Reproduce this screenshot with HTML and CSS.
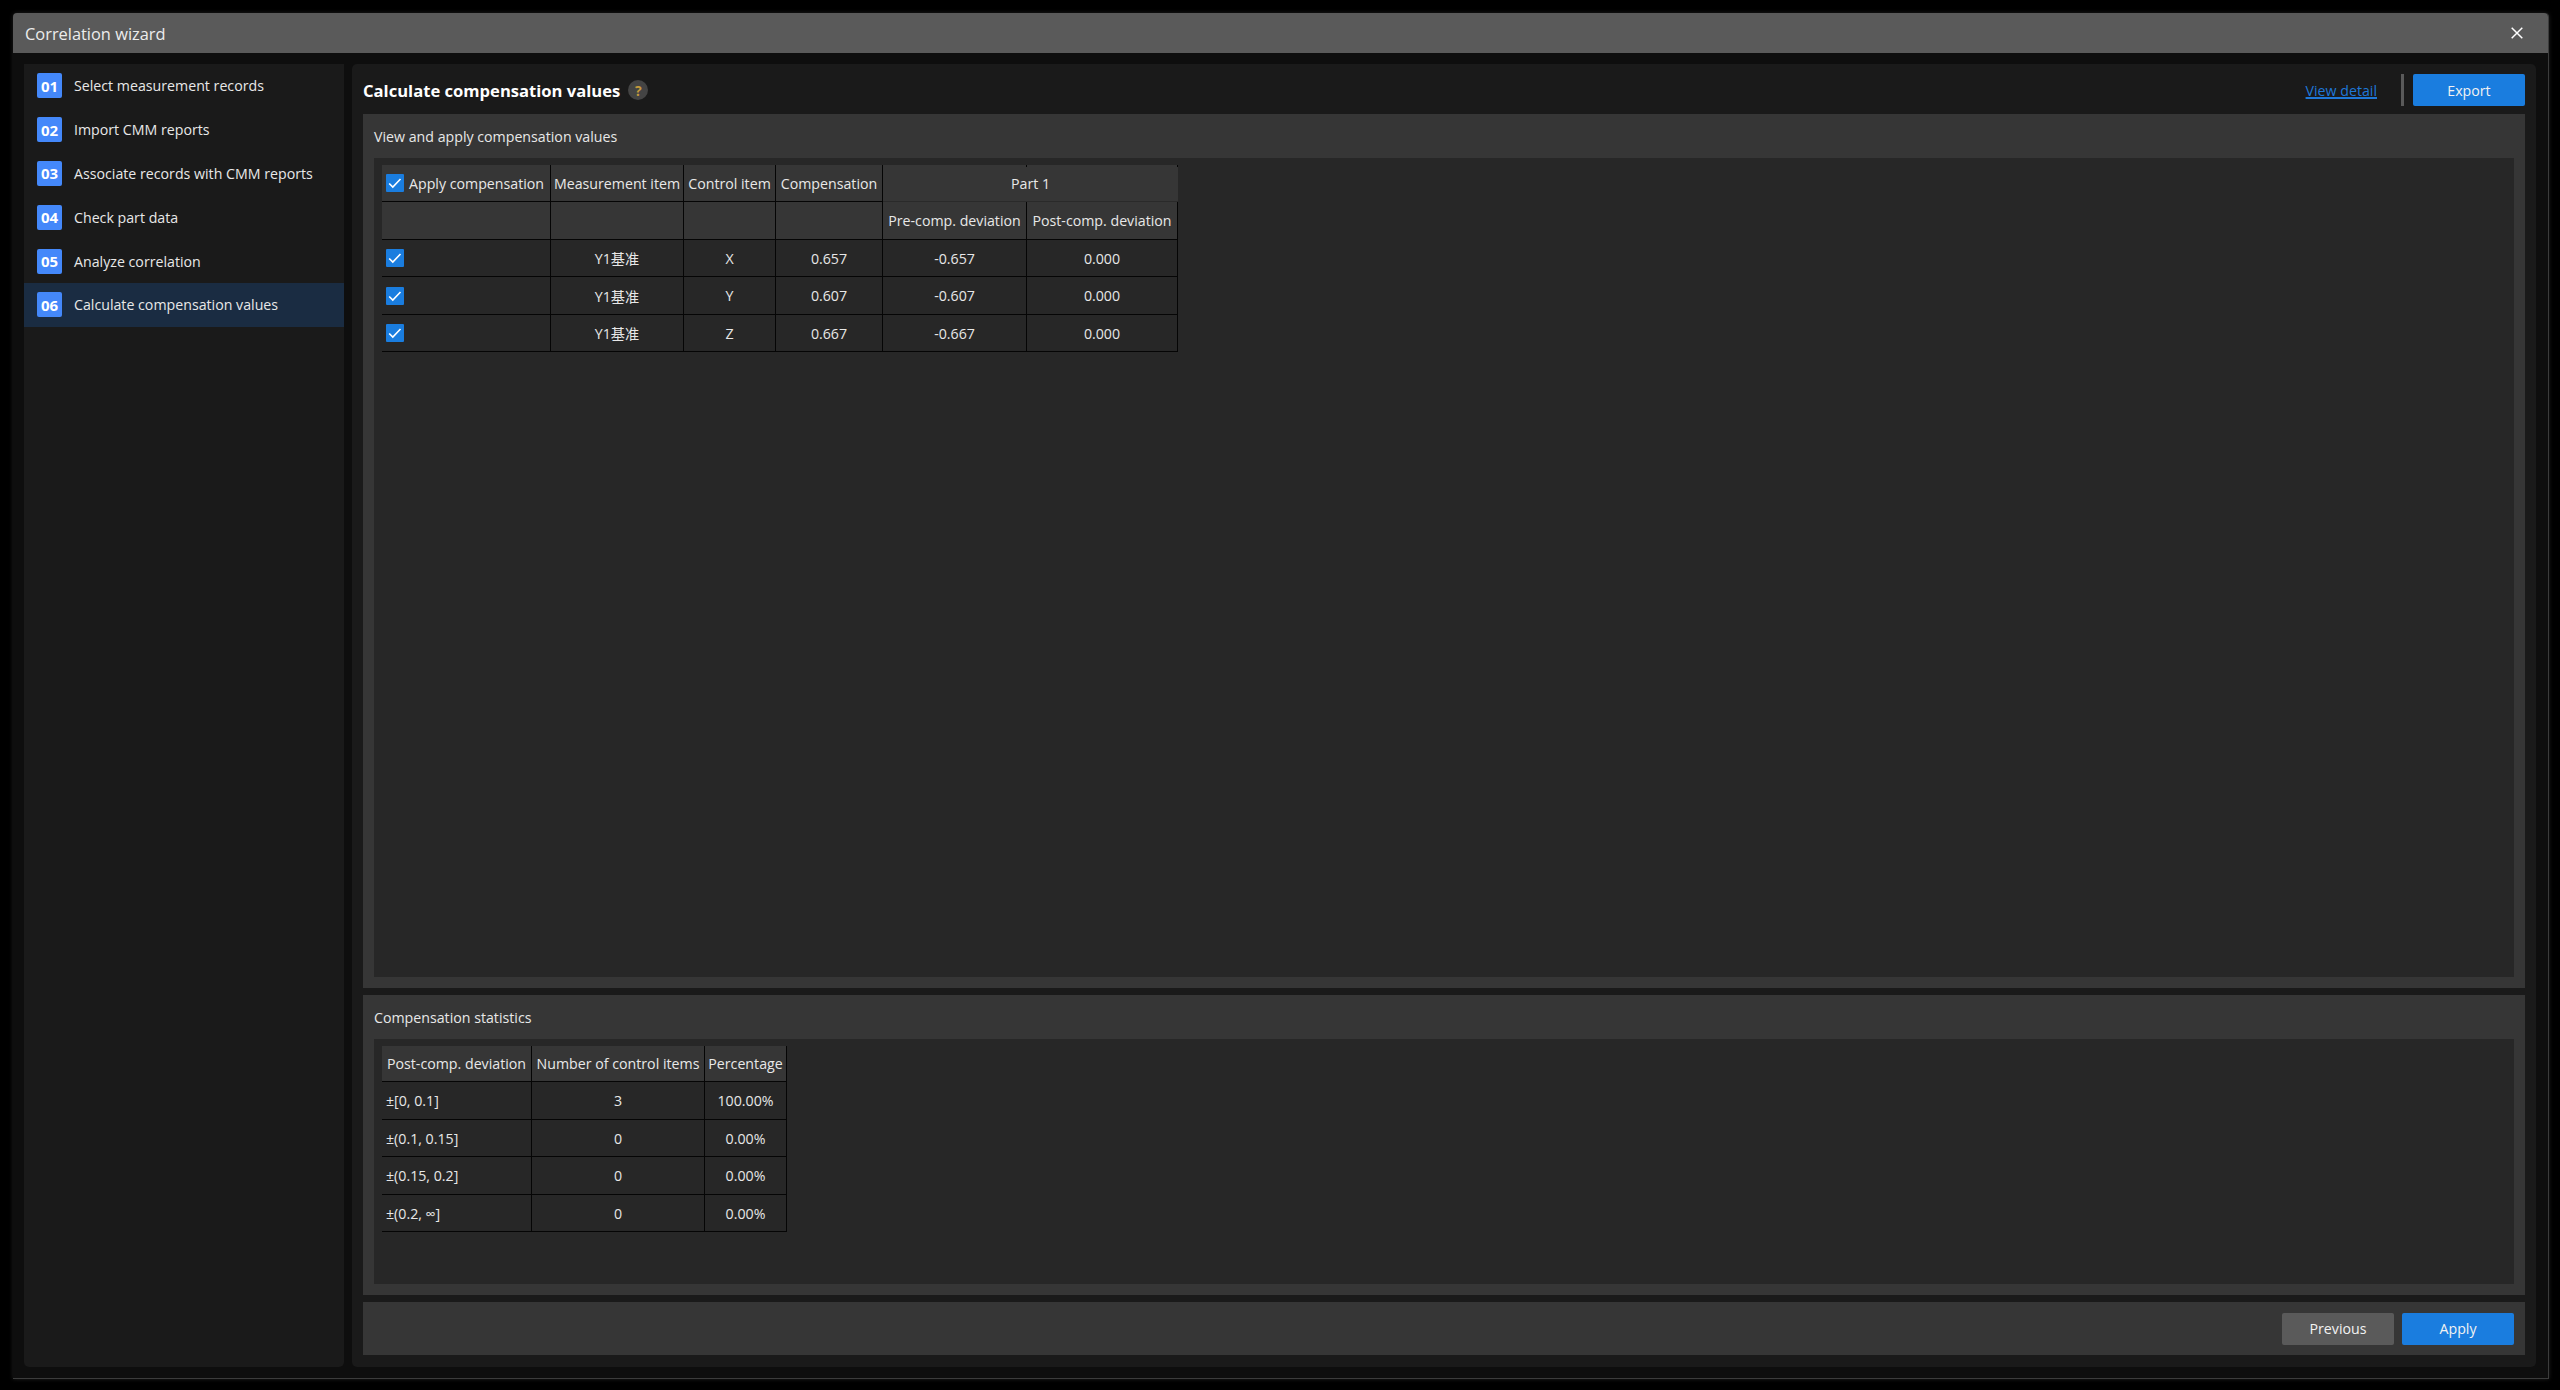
FILE: index.html
```html
<!DOCTYPE html>
<html lang="en">
<head>
<meta charset="utf-8">
<title>Correlation wizard</title>
<link rel="stylesheet" href="styles.css">
</head>
<body>
<div class="window">
  <header class="titlebar">
    <span class="window-title">Correlation wizard</span>
    <svg class="close" viewBox="0 0 12 12" width="12" height="12"><path d="M.7.7l10.6 10.6M11.3.7L.7 11.3" stroke="#fff" stroke-width="1.5" fill="none"/></svg>
  </header>
  <div class="content">
    <nav class="sidebar">
      <div class="step"><span class="badge">01</span><span>Select measurement records</span></div>
      <div class="step"><span class="badge">02</span><span>Import CMM reports</span></div>
      <div class="step"><span class="badge">03</span><span>Associate records with CMM reports</span></div>
      <div class="step"><span class="badge">04</span><span>Check part data</span></div>
      <div class="step"><span class="badge">05</span><span>Analyze correlation</span></div>
      <div class="step active"><span class="badge">06</span><span>Calculate compensation values</span></div>
    </nav>
    <main class="main">
      <div class="main-head">
        <h1 class="heading">Calculate compensation values</h1>
        <span class="help">?</span>
        <a class="link" href="#">View detail</a>
        <span class="sep"></span>
        <button class="btn primary">Export</button>
      </div>
      <section class="section section-a">
        <div class="section-title">View and apply compensation values</div>
        <div class="inner">
          <table class="grid grid-a">
            <colgroup><col class="a1"><col class="a2"><col class="a3"><col class="a4"><col class="a5"><col class="a6"></colgroup>
            <tr class="head r37">
              <th class="left"><div class="check-label"><span class="cb"><svg viewBox="0 0 18 18"><path d="M3.2 9.5l3.6 3.6L14.5 5" stroke="#fff" stroke-width="1.6" fill="none"/></svg></span>Apply compensation</div></th>
              <th>Measurement item</th><th>Control item</th><th>Compensation</th><th colspan="2" class="part">Part 1</th>
            </tr>
            <tr class="head r38"><th></th><th></th><th></th><th></th><th>Pre-comp. deviation</th><th>Post-comp. deviation</th></tr>
            <tr class="r37"><td class="left"><div class="check-label"><span class="cb"><svg viewBox="0 0 18 18"><path d="M3.2 9.5l3.6 3.6L14.5 5" stroke="#fff" stroke-width="1.6" fill="none"/></svg></span></div></td><td>Y1基准</td><td>X</td><td>0.657</td><td>-0.657</td><td>0.000</td></tr>
            <tr class="r38"><td class="left"><div class="check-label"><span class="cb"><svg viewBox="0 0 18 18"><path d="M3.2 9.5l3.6 3.6L14.5 5" stroke="#fff" stroke-width="1.6" fill="none"/></svg></span></div></td><td>Y1基准</td><td>Y</td><td>0.607</td><td>-0.607</td><td>0.000</td></tr>
            <tr class="r37"><td class="left"><div class="check-label"><span class="cb"><svg viewBox="0 0 18 18"><path d="M3.2 9.5l3.6 3.6L14.5 5" stroke="#fff" stroke-width="1.6" fill="none"/></svg></span></div></td><td>Y1基准</td><td>Z</td><td>0.667</td><td>-0.667</td><td>0.000</td></tr>
          </table>
        </div>
      </section>
      <section class="section section-b">
        <div class="section-title">Compensation statistics</div>
        <div class="inner">
          <table class="grid grid-b">
            <colgroup><col class="b1"><col class="b2"><col class="b3"></colgroup>
            <tr class="head r36"><th>Post-comp. deviation</th><th>Number of control items</th><th>Percentage</th></tr>
            <tr class="r38"><td class="left">±[0, 0.1]</td><td>3</td><td>100.00%</td></tr>
            <tr class="r37"><td class="left">±(0.1, 0.15]</td><td>0</td><td>0.00%</td></tr>
            <tr class="r38"><td class="left">±(0.15, 0.2]</td><td>0</td><td>0.00%</td></tr>
            <tr class="r37"><td class="left">±(0.2, ∞]</td><td>0</td><td>0.00%</td></tr>
          </table>
        </div>
      </section>
      <footer class="footer">
        <button class="btn neutral">Previous</button>
        <button class="btn primary">Apply</button>
      </footer>
    </main>
  </div>
</div>
</body>
</html>
```
FILE: styles.css
```css
* { box-sizing: border-box; }
html, body { margin: 0; padding: 0; height: 100%; }
body {
  background: #000;
  overflow: hidden;
  font-family: "Open Sans", "Noto Sans CJK SC", sans-serif;
  font-size: 14.2px;
  color: #e8e8e8;
}
.window {
  width: 2536px;
  height: 1366px;
  margin: 13px 0 0 13px;
  background: #0e0e0e;
  border-right: 1px solid #3c3c3c;
  border-bottom: 1px solid #3c3c3c;
  border-radius: 4px 4px 0 0;
  display: flex;
  flex-direction: column;
  box-shadow: 0 0 4px rgba(70, 70, 70, .45);
}
.titlebar {
  height: 40px;
  flex: none;
  background: #5a5a5a;
  border-radius: 4px 4px 0 0;
  display: flex;
  align-items: center;
  justify-content: space-between;
  padding: 0 25px 0 12px;
}
.window-title { font-size: 16.4px; color: #ececec; }
.close { display: block; }
.content {
  flex: 1;
  display: flex;
  gap: 8px;
  padding: 11px 12px 11px 11px;
}
.sidebar {
  width: 320px;
  background: #1a1a1a;
  border-radius: 0 0 5px 5px;
}
.step {
  height: 43.8px;
  display: flex;
  align-items: center;
  gap: 12px;
  padding-left: 13px;
  color: #e8e8e8;
}
.step.active { background: #1a2c42; }
.badge {
  width: 25px;
  height: 25px;
  flex: none;
  background: #4488fa;
  border-radius: 2px;
  color: #fff;
  font-weight: 700;
  font-size: 15px;
  display: flex;
  align-items: center;
  justify-content: center;
}
.main {
  width: 2184px;
  background: #1a1a1a;
  border-radius: 5px;
  padding: 0 11px;
  display: flex;
  flex-direction: column;
}
.main-head {
  height: 50px;
  flex: none;
  display: flex;
  align-items: center;
  padding-top: 2px;
}
.heading { margin: 0; font-size: 16.6px; font-weight: 700; color: #fff; }
.help {
  width: 20px;
  height: 20px;
  margin-left: 8px;
  border-radius: 50%;
  background: #444;
  color: #c49a3c;
  font-size: 14px;
  font-weight: 700;
  display: flex;
  align-items: center;
  justify-content: center;
}
.link {
  margin-left: auto;
  color: #1f78d8;
  font-size: 14.2px;
  text-decoration: underline;
  text-decoration-thickness: 2px;
}
.sep {
  width: 3px;
  height: 32px;
  background: #5a5a5a;
  margin: 0 9px 0 24px;
}
.btn {
  width: 112px;
  height: 32px;
  border: 0;
  border-radius: 2px;
  font: inherit;
  color: #f2f2f2;
  padding: 0;
}
.primary { background: #1a7ddf; }
.neutral { background: #5a5a5a; }
.section {
  background: #363636;
  flex: none;
  display: flex;
  flex-direction: column;
  padding: 0 11px 11px;
}
.section-a { height: 874px; }
.section-b { height: 300px; margin-top: 7px; }
.section-title {
  height: 44px;
  flex: none;
  display: flex;
  align-items: center;
  padding-top: 1px;
  color: #e8e8e8;
}
.inner {
  flex: 1;
  background: #272727;
  padding: 7px 8px;
}
.grid {
  border-collapse: separate;
  border-spacing: 0;
  table-layout: fixed;
}
.a1 { width: 169px; }
.a2 { width: 133px; }
.a3 { width: 92px; }
.a4 { width: 107px; }
.a5 { width: 144px; }
.a6 { width: 151px; }
.grid-a { width: 796px; }
.b1 { width: 150px; }
.b2 { width: 173px; }
.b3 { width: 82px; }
.grid-b { width: 405px; }
.r36 { height: 36px; }
.r37 { height: 37px; }
.r38 { height: 38px; }
.grid th, .grid td {
  padding: 0;
  text-align: center;
  font-weight: 400;
  white-space: nowrap;
  border-right: 1px solid #050505;
  border-bottom: 1px solid #050505;
  overflow: hidden;
}
.head th { background: #363636; }
.grid th.part {
  border-bottom-color: #2a2a2a;
  border-right: 0;
  background:
    linear-gradient(#050505, #050505) 143px 0 / 1px 2px no-repeat,
    linear-gradient(#050505, #050505) right 0 / 1px 2px no-repeat,
    #363636;
}
.grid th.left, .grid td.left { text-align: left; padding-left: 4px; }
.check-label { display: flex; align-items: center; gap: 5px; }
.cb {
  display: block;
  width: 18px;
  height: 18px;
  background: #1a7ddf;
  border-radius: 1px;
  flex: none;
}
.cb svg { display: block; width: 18px; height: 18px; }
.footer {
  height: 53px;
  flex: none;
  margin-top: 7px;
  background: #363636;
  display: flex;
  justify-content: flex-end;
  align-items: center;
  gap: 8px;
  padding: 0 11px;
}
```
